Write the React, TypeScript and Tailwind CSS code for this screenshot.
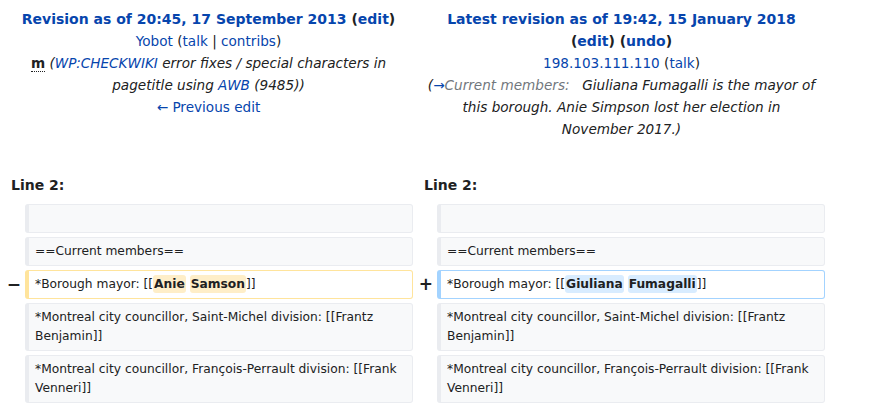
const link = 'text-[#0645ad]';

function Ctx({ children }: { children?: React.ReactNode }) {
    return (
        <div className="rounded-[3px] border border-l-4 border-[#eaecf0] bg-[#f8f9fa] px-[6px] py-1 leading-[19px] text-[12.25px] text-[#202122] break-words">
            {children ?? '\u00a0'}
        </div>
    );
}

function Marker({ sign }: { sign: string }) {
    return (
        <div className="flex items-center justify-end pr-[4px] text-[17px] font-bold text-[#202122]">
            {sign}
        </div>
    );
}

function Word({ tone, children }: { tone: 'del' | 'add'; children: React.ReactNode }) {
    return (
        <span
            className={
                tone === 'del'
                    ? 'rounded-[3px] bg-[#feeec8] px-[1px] py-[2px] font-bold'
                    : 'rounded-[3px] bg-[#d8ecff] px-[1px] py-[2px] font-bold'
            }
        >
            {children}
        </span>
    );
}

export default function App() {
    return (
        <div className="min-h-screen bg-white font-['DejaVu_Sans',sans-serif] text-[#202122]">
            <div className="w-[826px]">
                {/* Revision headers */}
                <div className="grid grid-cols-[413px_413px] pt-2 text-[13.6px] leading-[22px] text-center">
                    <div className="pl-1">
                        <div className="text-[14px] font-bold">
                            <span className={link}>Revision as of 20:45, 17 September 2013</span>{' '}
                            (<span className={link}>edit</span>)
                        </div>
                        <div>
                            <span className={link}>Yobot</span> (<span className={link}>talk</span> |{' '}
                            <span className={link}>contribs</span>)
                        </div>
                        <div>
                            <abbr className="font-bold no-underline border-b border-dotted border-[#202122]">m</abbr>{' '}
                            <span className="italic">
                                (<span className={link}>WP:CHECKWIKI</span> error fixes / special characters in
                                pagetitle using <span className={link}>AWB</span> (9485))
                            </span>
                        </div>
                        <div>
                            <span className={link}>← Previous edit</span>
                        </div>
                    </div>
                    <div className="pl-[14px] pr-[10px]">
                        <div className="text-[14px] font-bold">
                            <span className={link}>Latest revision as of 19:42, 15 January 2018</span>{' '}
                            (<span className={link}>edit</span>) (<span className={link}>undo</span>)
                        </div>
                        <div>
                            <span className={link}>198.103.111.110</span> (<span className={link}>talk</span>)
                        </div>
                        <div className="italic">
                            (<span className={link}>→</span>
                            <span className="mr-[4px] text-[#72777d]">Current members:</span>
                            {'\u00a0 '}Giuliana Fumagalli is the mayor of this borough. Anie Simpson lost her
                            election in November 2017.)
                        </div>
                    </div>
                </div>

                {/* Line numbers */}
                <div className="mt-[34px] grid grid-cols-[413px_413px] text-[14px] font-bold leading-[22px]">
                    <div className="pl-[11px]">Line 2:</div>
                    <div className="pl-[11px]">Line 2:</div>
                </div>

                {/* Diff rows */}
                <div className="mt-2 flex flex-col gap-1">
                    <div className="grid grid-cols-[25px_388px_24px_388px]">
                        <div />
                        <Ctx />
                        <div />
                        <Ctx />
                    </div>
                    <div className="grid grid-cols-[25px_388px_24px_388px]">
                        <div />
                        <Ctx>==Current members==</Ctx>
                        <div />
                        <Ctx>==Current members==</Ctx>
                    </div>
                    <div className="grid grid-cols-[25px_388px_24px_388px]">
                        <Marker sign="−" />
                        <div className="rounded-[3px] border border-l-4 border-[#ffe49c] bg-white px-[6px] py-1 text-[12.25px] leading-[19px]">
                            *Borough mayor: [[<Word tone="del">Anie</Word> <Word tone="del">Samson</Word>]]
                        </div>
                        <Marker sign="+" />
                        <div className="rounded-[3px] border border-l-4 border-[#a3d3ff] bg-white px-[6px] py-1 text-[12.25px] leading-[19px]">
                            *Borough mayor: [[<Word tone="add">Giuliana</Word> <Word tone="add">Fumagalli</Word>]]
                        </div>
                    </div>
                    <div className="grid grid-cols-[25px_388px_24px_388px]">
                        <div />
                        <Ctx>*Montreal city councillor, Saint-Michel division: [[Frantz Benjamin]]</Ctx>
                        <div />
                        <Ctx>*Montreal city councillor, Saint-Michel division: [[Frantz Benjamin]]</Ctx>
                    </div>
                    <div className="grid grid-cols-[25px_388px_24px_388px]">
                        <div />
                        <Ctx>*Montreal city councillor, François-Perrault division: [[Frank Venneri]]</Ctx>
                        <div />
                        <Ctx>*Montreal city councillor, François-Perrault division: [[Frank Venneri]]</Ctx>
                    </div>
                </div>
            </div>
        </div>
    );
}
